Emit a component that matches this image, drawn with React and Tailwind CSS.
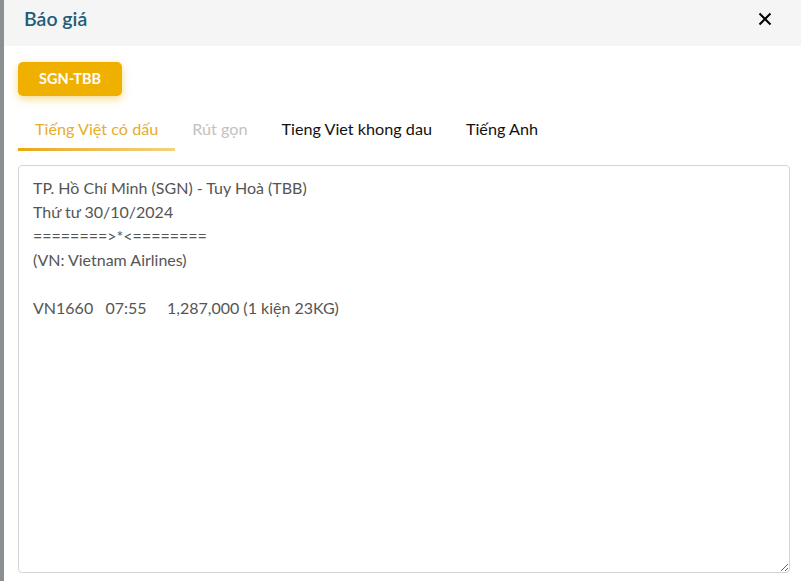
import React, { useState } from "react";

const tabs = ["Tiếng Việt có dấu", "Rút gọn", "Tieng Viet khong dau", "Tiếng Anh"];

const quote = `TP. Hồ Chí Minh (SGN) - Tuy Hoà (TBB)
Thứ tư 30/10/2024
========>*<========
(VN: Vietnam Airlines)

VN1660   07:55     1,287,000 (1 kiện 23KG)`;

const App = () => {
  const [active, setActive] = useState(0);

  return (
    <div className="flex h-[581px] w-[801px] overflow-hidden bg-white font-['Lato','Noto_Sans',sans-serif]">
      {/* backdrop edge */}
      <div className="w-[4px] shrink-0 bg-[#8a8f92]" />

      <div className="flex min-w-0 flex-1 flex-col">
        {/* Header */}
        <div className="flex h-[46px] shrink-0 items-center justify-between bg-[#f5f5f5] pb-[9px] pl-[20px] pr-[26px]">
          <h2 className="text-[19.5px] font-semibold text-[#1f5d78]">Báo giá</h2>
          <button className="flex h-5 w-5 items-center justify-center text-black">
            <svg width="14" height="14" viewBox="0 0 14 14" fill="none" stroke="currentColor" strokeWidth="2">
              <path d="M1.5 1.5 L12.5 12.5 M12.5 1.5 L1.5 12.5" />
            </svg>
          </button>
        </div>

        {/* Body */}
        <div className="flex flex-1 flex-col pl-[14px] pr-[11px] pt-[16px] pb-[8px]">
          <div>
            <button className="h-[34px] rounded-[5px] bg-[#f0b000] px-[21px] text-[14.5px] font-bold text-white shadow-[0_3px_8px_rgba(240,176,0,0.45)]">
              SGN-TBB
            </button>
          </div>

          {/* Tabs */}
          <div className="mt-[20px] flex">
            {tabs.map((t, i) => (
              <button
                key={t}
                onClick={() => setActive(i)}
                className={`relative h-[35px] px-[17px] pb-[9px] text-[16.2px] ${
                  i === active ? "text-[#e8ad2a]" : i === 1 ? "text-[#c2c2c2]" : "text-[#111]"
                }`}
              >
                {t}
                {i === active && (
                  <span className="absolute bottom-0 left-0 h-[3px] w-full bg-gradient-to-r from-[#e9a900] to-[#f3d27e]" />
                )}
              </button>
            ))}
          </div>

          <textarea
            readOnly
            value={quote}
            className="mt-[14px] w-full flex-1 rounded-[4px] border border-[#d4d4d4] px-[14px] pt-[10px] text-[16px] leading-[24px] text-[#555] outline-none"
          />
        </div>
      </div>
    </div>
  );
};

export default App;
